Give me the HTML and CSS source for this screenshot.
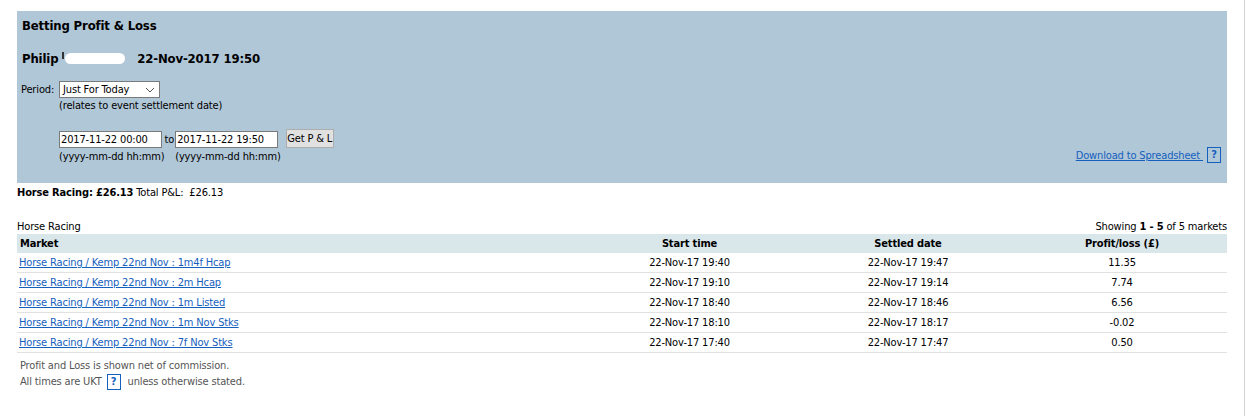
FILE: index.html
```html
<!DOCTYPE html>
<html lang="en">
<head>
    <meta charset="UTF-8">
    <title>Betting Profit &amp; Loss</title>
    <link rel="stylesheet" href="styles.css">
</head>
<body>
    <div class="page">
        <div class="pl-panel">
            <h1 class="pl-title">Betting Profit &amp; Loss</h1>
            <h2 class="pl-user">Philip <span class="initial"></span><span class="blur"></span> 22-Nov-2017 19:50</h2>

            <div class="period-row">
                <label for="period" class="period-label">Period:</label>
                <div class="period-fields">
                    <div class="select-box">
                        <span>Just For Today</span>
                        <svg width="10" height="6" viewBox="0 0 10 6"><path d="M1 1l4 4 4-4" fill="none" stroke="#555" stroke-width="1"/></svg>
                    </div>
                    <div class="hint">(relates to event settlement date)</div>
                </div>
            </div>

            <div class="range-row">
                <div class="range-field">
                    <input type="text" class="date-input" value="2017-11-22 00:00">
                    <div class="hint">(yyyy-mm-dd hh:mm)</div>
                </div>
                <span class="to">to</span>
                <div class="range-field">
                    <input type="text" class="date-input" value="2017-11-22 19:50">
                    <div class="hint">(yyyy-mm-dd hh:mm)</div>
                </div>
                <button class="btn-get">Get P &amp; L</button>
                <div class="download">
                    <a href="#">Download to Spreadsheet </a>
                    <span class="help">?</span>
                </div>
            </div>
        </div>

        <div class="totals"><b>Horse Racing: £26.13</b> Total P&amp;L:&nbsp; £26.13</div>

        <div class="table-top">
            <span>Horse Racing</span>
            <span>Showing <b>1 - 5</b> of 5 markets</span>
        </div>

        <table class="markets">
            <thead>
                <tr>
                    <th class="col-market">Market</th>
                    <th class="col-start">Start time</th>
                    <th class="col-settled">Settled date</th>
                    <th class="col-pl">Profit/loss (£)</th>
                </tr>
            </thead>
            <tbody>
                <tr><td><a href="#">Horse Racing / Kemp 22nd Nov : 1m4f Hcap</a></td><td>22-Nov-17 19:40</td><td>22-Nov-17 19:47</td><td>11.35</td></tr>
                <tr><td><a href="#">Horse Racing / Kemp 22nd Nov : 2m Hcap</a></td><td>22-Nov-17 19:10</td><td>22-Nov-17 19:14</td><td>7.74</td></tr>
                <tr><td><a href="#">Horse Racing / Kemp 22nd Nov : 1m Listed</a></td><td>22-Nov-17 18:40</td><td>22-Nov-17 18:46</td><td>6.56</td></tr>
                <tr><td><a href="#">Horse Racing / Kemp 22nd Nov : 1m Nov Stks</a></td><td>22-Nov-17 18:10</td><td>22-Nov-17 18:17</td><td>-0.02</td></tr>
                <tr><td><a href="#">Horse Racing / Kemp 22nd Nov : 7f Nov Stks</a></td><td>22-Nov-17 17:40</td><td>22-Nov-17 17:47</td><td>0.50</td></tr>
            </tbody>
        </table>

        <div class="notes">
            <p>Profit and Loss is shown net of commission.</p>
            <p>All times are UKT <span class="help">?</span> unless otherwise stated.</p>
        </div>
    </div>
</body>
</html>
```

FILE: styles.css
```css
body {
    font-family: "DejaVu Sans Condensed", "DejaVu Sans", sans-serif;
    font-size: 11px;
    letter-spacing: -0.15px;
    color: #000;
    background-color: #fff;
    margin: 0;
    padding: 0;
}

.page {
    width: 1210px;
    height: 405px;
    padding: 11px 17px 0 17px;
    border-right: 1px solid #d4d4d4;
    background-color: #fff;
}

.pl-panel {
    background-color: #b0c7d7;
    height: 172px;
    padding: 0 5px 0 5px;
    box-sizing: border-box;
}

.pl-title {
    margin: 0;
    padding-top: 7px;
    font-size: 13px;
    font-weight: bold;
    line-height: 16px;
}

.pl-user {
    margin: 0;
    padding-top: 17px;
    font-size: 13px;
    font-weight: bold;
    line-height: 16px;
}

.initial {
    display: inline-block;
    width: 2px;
    height: 7px;
    background-color: #333;
    vertical-align: 4px;
}

.blur {
    display: inline-block;
    width: 60px;
    height: 11px;
    background-color: #fff;
    border-radius: 8px;
    vertical-align: -1px;
    margin: 0 8px 0 1px;
}

.period-row {
    display: flex;
    margin-top: 14px;
    margin-left: -1px;
}

.period-label {
    width: 38px;
    padding-top: 2px;
}

.select-box {
    display: flex;
    align-items: center;
    justify-content: space-between;
    padding: 0 4px 0 3px;
    box-sizing: border-box;
    width: 101px;
    height: 17px;
    background-color: #fff;
    border: 1px solid #7a7a7a;
}

.hint {
    line-height: 14px;
    margin-top: 1px;
}

.range-row {
    display: flex;
    align-items: flex-start;
    margin-top: 18px;
    padding-left: 37px;
}

.date-input {
    width: 103px;
    height: 17px;
    box-sizing: border-box;
    border: 1px solid #7a7a7a;
    padding: 0 1px;
    font-family: inherit;
    font-size: 11px;
    letter-spacing: -0.15px;
    margin: 0;
}

.range-field .hint {
    margin-top: 2px;
}

.to {
    padding: 2px 1px 0 0;
}

.btn-get {
    width: 48px;
    height: 19px;
    margin: -2px 0 0 5px;
    padding: 0;
    background-color: #e1e1e1;
    border: 1px solid #adadad;
    font-family: inherit;
    font-size: 11px;
    letter-spacing: -0.15px;
}

.download {
    margin-left: auto;
    margin-top: 16px;
    margin-right: 1px;
    display: flex;
    align-items: center;
}

.download a {
    color: #1560bd;
    white-space: pre;
}

.help {
    display: inline-block;
    width: 12px;
    height: 14px;
    border: 1px solid #1560bd;
    color: #1560bd;
    font-weight: bold;
    text-align: center;
    line-height: 14px;
    margin-left: 4px;
}

.totals {
    margin-top: 3px;
    line-height: 14px;
}

.table-top {
    display: flex;
    justify-content: space-between;
    margin-top: 20px;
    line-height: 14px;
}

.markets {
    width: 1210px;
    border-collapse: collapse;
    margin-top: 0;
}

.markets th {
    background-color: #d9e6ea;
    height: 19px;
    padding: 0;
    font-size: 11px;
    font-weight: bold;
    text-align: center;
}

.markets th.col-market {
    text-align: left;
    padding-left: 3px;
}

.col-market { width: 560px; }
.col-start { width: 219px; }
.col-settled { width: 218px; }

.markets td {
    height: 19px;
    padding: 0;
    border-bottom: 1px solid #e1e1e1;
    text-align: center;
}

.markets td:first-child {
    text-align: left;
    padding-left: 2px;
}

.markets a {
    color: #1560bd;
}

.notes {
    margin-top: 5px;
    padding-left: 3px;
    color: #555;
}

.notes p {
    margin: 0;
    line-height: 16px;
}

.notes .help {
    margin: 0 4px 0 2px;
}
```
